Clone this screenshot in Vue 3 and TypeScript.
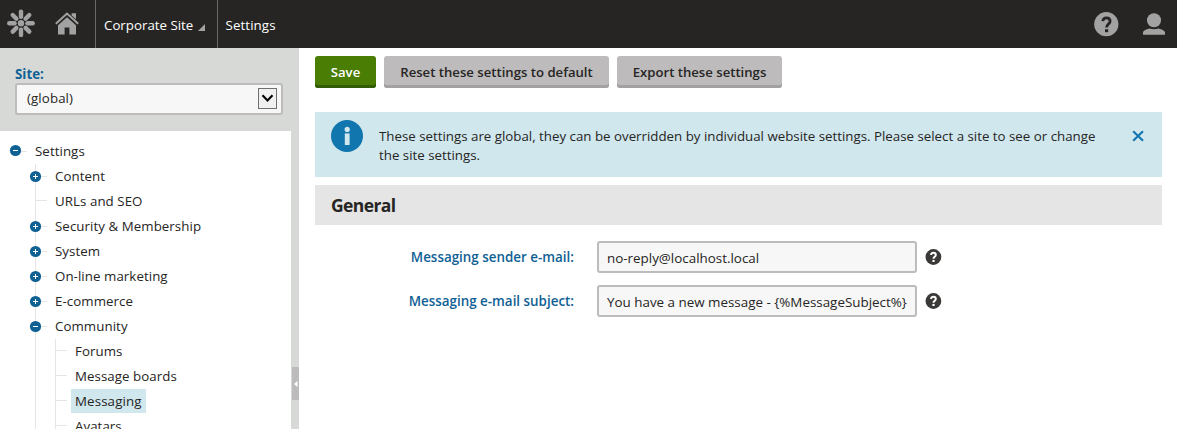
<script setup lang="ts">
import { ref } from 'vue'

interface TreeItem {
  label: string
  toggle?: 'plus' | 'minus'
  selected?: boolean
  children?: TreeItem[]
}

const tree: TreeItem[] = [
  { label: 'Content', toggle: 'plus' },
  { label: 'URLs and SEO' },
  { label: 'Security & Membership', toggle: 'plus' },
  { label: 'System', toggle: 'plus' },
  { label: 'On-line marketing', toggle: 'plus' },
  { label: 'E-commerce', toggle: 'plus' },
  {
    label: 'Community',
    toggle: 'minus',
    children: [
      { label: 'Forums' },
      { label: 'Message boards' },
      { label: 'Messaging', selected: true },
      { label: 'Avatars' },
    ],
  },
]

const fields = ref([
  { id: 'sender', label: 'Messaging sender e-mail:', value: 'no-reply@localhost.local' },
  { id: 'subject', label: 'Messaging e-mail subject:', value: 'You have a new message - {%MessageSubject%}' },
])

const petals = [0, 45, 90, 135, 180, 225, 270, 315]
</script>

<template>
  <div class="page">
    <header class="topbar">
      <a class="logo">
        <svg width="28" height="28" viewBox="0 0 28 28">
          <circle cx="14" cy="14.3" r="3.2" fill="#a3a2a2" />
          <line
            v-for="a in petals"
            :key="a"
            x1="14" y1="7.8" x2="14" y2="2.6"
            :transform="`rotate(${a} 14 14.3)`"
            stroke="#a3a2a2" stroke-width="4.4" stroke-linecap="round"
          />
        </svg>
      </a>
      <a class="home">
        <svg width="24" height="24" viewBox="0 0 24 24">
          <path d="M0.8 11.8 12 1.6 23.2 11.8" fill="none" stroke="#a3a2a2" stroke-width="2" />
          <path d="M16.6 1.2H21V7.2L16.6 3.4Z" fill="#a3a2a2" />
          <path d="M12 5.2 21 13.2V22.6H14.4V15.5H9.6V22.6H3V13.2Z" fill="#a3a2a2" />
        </svg>
      </a>
      <a class="crumb site-name">Corporate Site
        <svg class="corner" width="7" height="7" viewBox="0 0 7 7"><path d="M7 0V7H0Z" fill="#a3a2a2" /></svg>
      </a>
      <a class="crumb app-name">Settings</a>
      <div class="tools">
        <svg width="25" height="25" viewBox="0 0 25 25">
          <circle cx="12.3" cy="12.2" r="12.1" fill="#a3a2a2" />
          <path d="M8.8 9.2C9 6.8 10.4 5.8 12.4 5.8S16.1 7 16.1 9.2C16.1 12 12.6 12 12.6 15.4" fill="none" stroke="#262524" stroke-width="2.8" />
          <rect x="11" y="17.2" width="3.2" height="3" fill="#262524" />
        </svg>
        <svg width="22" height="23" viewBox="0 0 22 23">
          <circle cx="11" cy="7.2" r="7" fill="#a3a2a2" />
          <path d="M0 21.8V19.6C0 17.8 3 16.6 6.2 15.5Q11 16.9 15.8 15.5C19 16.6 22 17.8 22 19.6V21.8Z" fill="#a3a2a2" />
        </svg>
      </div>
    </header>

    <div class="body">
      <aside class="sidebar">
        <div class="site-picker">
          <label class="site-label">Site:</label>
          <div class="select">
            <span class="select-value">(global)</span>
            <span class="select-arrow">
              <svg width="13" height="9" viewBox="0 0 13 9"><path d="M1.5 1.2 6.5 6.4 11.5 1.2" fill="none" stroke="#000" stroke-width="2.1" /></svg>
            </span>
          </div>
        </div>
        <div class="tree-wrap">
          <nav class="tree">
            <div class="row root">
              <span class="slot">
                <svg class="toggle" width="11" height="11" viewBox="0 0 11 11"><circle cx="5.5" cy="5.5" r="5.6" fill="#0f6194" /><path d="M3 5.5H8" stroke="#fff" /></svg>
                <i class="stub"></i>
              </span>
              <span class="label">Settings</span>
            </div>
            <ul class="branch">
              <li v-for="item in tree" :key="item.label">
                <div class="row">
                  <span class="slot">
                    <svg v-if="item.toggle" class="toggle" width="11" height="11" viewBox="0 0 11 11">
                      <circle cx="5.5" cy="5.5" r="5.6" fill="#0f6194" />
                      <path :d="item.toggle === 'plus' ? 'M3 5.5H8M5.5 3V8' : 'M3 5.5H8'" stroke="#fff" />
                    </svg>
                    <i class="stub" :class="{ long: !item.toggle }"></i>
                  </span>
                  <span class="label">{{ item.label }}</span>
                </div>
                <ul v-if="item.children" class="branch nested">
                  <li v-for="child in item.children" :key="child.label">
                    <div class="row">
                      <span class="slot"><i class="stub long"></i></span>
                      <span class="label" :class="{ selected: child.selected }">{{ child.label }}</span>
                    </div>
                  </li>
                </ul>
              </li>
            </ul>
          </nav>
          <div class="splitter">
            <div class="handle"><svg width="4" height="6" viewBox="0 0 4 6"><path d="M3.5 0V6L0 3Z" fill="#fff" /></svg></div>
          </div>
        </div>
      </aside>

      <main class="content">
        <div class="actions">
          <button class="btn primary">Save</button>
          <button class="btn reset">Reset these settings to default</button>
          <button class="btn export">Export these settings</button>
        </div>

        <div class="alert">
          <svg class="info" width="32" height="32" viewBox="0 0 32 32">
            <circle cx="16" cy="16" r="16" fill="#1175ae" />
            <circle cx="16.2" cy="9.4" r="2.6" fill="#d0e7ed" />
            <rect x="13.8" y="13.4" width="4.8" height="11.6" fill="#d0e7ed" />
          </svg>
          <p>These settings are global, they can be overridden by individual website settings. Please select a site to see or change<br />the site settings.</p>
          <svg class="close" width="12" height="12" viewBox="0 0 12 12"><path d="M1.2 1.2 11 10.8M11 1.2 1.2 10.8" stroke="#1175ae" stroke-width="2.1" /></svg>
        </div>

        <h4 class="section">General</h4>

        <form class="form">
          <div v-for="f in fields" :key="f.id" class="field">
            <label :for="f.id">{{ f.label }}</label>
            <input :id="f.id" v-model="f.value" type="text" />
            <svg class="help" width="17" height="16" viewBox="0 0 17 16">
              <circle cx="8.4" cy="8" r="7.9" fill="#3a3938" />
              <path d="M6.1 6.1C6.1 4.4 7.1 3.8 8.4 3.8S10.8 4.6 10.8 6C10.8 7.8 8.5 7.8 8.5 9.8" fill="none" stroke="#fff" stroke-width="2" />
              <rect x="7.4" y="10.9" width="2.2" height="2.1" fill="#fff" />
            </svg>
          </div>
        </form>
      </main>
    </div>
  </div>
</template>

<style>
html,
body {
  margin: 0;
  overflow: hidden;
}
</style>

<style scoped>
.page {
  width: 1177px;
  height: 429px;
  display: flex;
  flex-direction: column;
  overflow: hidden;
  background: #fff;
  color: #262524;
  font: 13.3px/19px "Open Sans", "Noto Sans", sans-serif;
}
.page * { box-sizing: border-box; }

.topbar {
  flex: none;
  display: flex;
  height: 48px;
  background: #262524;
  color: #fff;
}
.logo { width: 55px; padding: 9px 0 0 7px; }
.home { width: 40px; padding: 12px 0 0; }
.topbar svg { display: block; }
.crumb {
  display: flex;
  border-left: 1px solid #6a6969;
  padding: 15px 0 0 8px;
  line-height: 20px;
  white-space: nowrap;
}
.app-name { padding-left: 7.5px; letter-spacing: 0.1px; }
.site-name { width: 122px; }
.crumb .corner { margin: 9px 0 0 5px; }
.tools {
  display: flex;
  margin-left: auto;
  padding: 12px 12px 0 0;
  gap: 24px;
}
.tools svg + svg { margin-top: 1px; }

.body { flex: 1; display: flex; min-height: 0; }
.sidebar {
  width: 299px;
  display: flex;
  flex-direction: column;
  background: #d6d9d6;
}
.site-picker { height: 83px; flex: none; padding: 16px 16px 0 15px; }
.site-label {
  display: block;
  height: 19px;
  line-height: 20px;
  font-weight: 700;
  color: #0f6194;
}
.select {
  display: flex;
  justify-content: space-between;
  align-items: center;
  height: 32px;
  padding: 0 4px 0 10px;
  border: 2px solid #bdbbbb;
  border-radius: 3px;
  background: #f7f7f7;
}
.select-value { padding-bottom: 2px; letter-spacing: 0.1px; }
.select-arrow {
  display: flex;
  align-items: center;
  justify-content: center;
  width: 19px;
  height: 21px;
  margin-bottom: 1px;
  border: 1px solid #707070;
  background: #f0f0f0;
}
.tree-wrap { flex: 1; display: flex; min-height: 0; }
.tree { width: 291px; padding-top: 8px; background: #fff; overflow: hidden; letter-spacing: 0.06px; }
.row { display: flex; height: 25px; }
.root { padding-left: 15px; }
.slot { width: 20px; display: flex; align-items: flex-start; }
.branch .slot { width: 19px; }
.toggle { flex: none; display: block; margin: 7px 0 0 -6px; overflow: visible; }
.root .toggle { margin: 6px 0 0 -5px; }
.stub { width: 6px; height: 1px; margin-top: 12px; background: #e5e5e5; }
.stub.long { width: 11px; margin-top: 11px; }
.branch {
  list-style: none;
  margin: 0 0 0 35px;
  padding: 0;
  border-left: 1px solid #e5e5e5;
}
.branch.nested { margin-left: 19px; }
.label { line-height: 24px; height: 24px; white-space: nowrap; }
.label.selected { background: #d0e7ed; margin-left: -4px; padding: 0 4.5px 0 4px; letter-spacing: 0.13px; }
.splitter { width: 8px; padding: 236px 0 0 1px; }
.handle {
  display: flex;
  align-items: center;
  justify-content: center;
  width: 7px;
  height: 33px;
  background: #bdbbbb;
}

.content { flex: 1; padding: 8px 15px 0 16px; }
.actions { display: flex; gap: 8px; }
.btn {
  height: 32px;
  padding: 3px 0;
  border: 0;
  border-radius: 3px;
  box-shadow: inset 0 -3px #a3a2a2;
  background: #bdbbbb;
  color: #262524;
  font: 600 13.15px/20px "Open Sans", "Noto Sans", sans-serif;
  white-space: nowrap;
}
.btn.primary { width: 61px; background: #497d04; color: #fff; box-shadow: inset 0 -3px #335d05; }
.btn.reset { width: 225px; }
.btn.export { width: 165px; }

.alert {
  display: flex;
  height: 65px;
  margin-top: 24px;
  padding: 8px 18px 0 16px;
  background: #d0e7ed;
}
.alert p { margin: 7px 0 0 16px; white-space: nowrap; }
.alert .info { flex: none; }
.alert .close { margin: 10px 0 0 auto; flex: none; }
.section {
  height: 40px;
  margin: 8px 0 0;
  padding-left: 16px;
  background: #e5e5e5;
  font-size: 17.5px;
  letter-spacing: -0.6px;
  line-height: 41px;
  font-weight: 700;
}
.form { padding-top: 16px; }
.field { display: flex; height: 32px; margin-bottom: 12px; }
.field label {
  width: 259px;
  text-align: right;
  font-size: 13.4px;
  font-weight: 600;
  line-height: 32px;
  color: #0f6194;
  white-space: nowrap;
}
.field input {
  width: 320px;
  height: 32px;
  margin: 0 0 0 23px;
  padding: 2px 0 0 8px;
  border: 2px solid #bdbbbb;
  border-radius: 3px;
  background: #f7f7f7;
  color: #262524;
  font: 13.4px "Open Sans", "Noto Sans", sans-serif;
}
.help { margin: 8px 0 0 8px; }
</style>
